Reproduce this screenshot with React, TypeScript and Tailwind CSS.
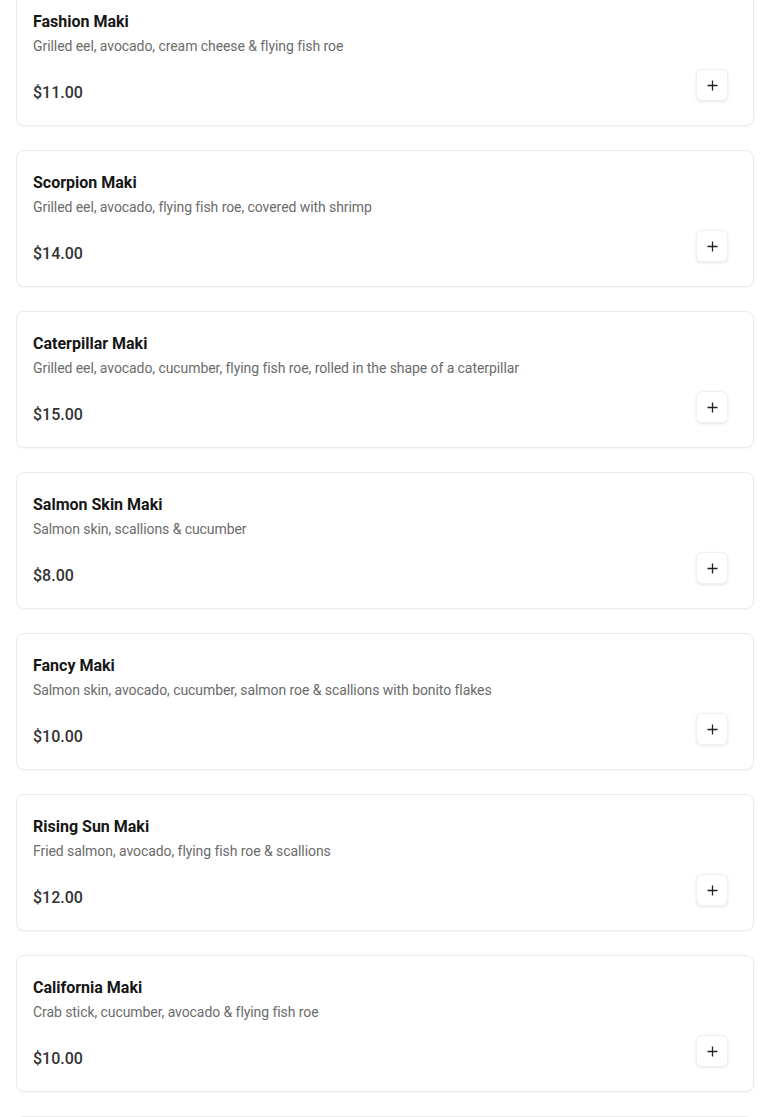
import React from "react";

const items = [
  { name: "Fashion Maki", desc: "Grilled eel, avocado, cream cheese & flying fish roe", price: "$11.00" },
  { name: "Scorpion Maki", desc: "Grilled eel, avocado, flying fish roe, covered with shrimp", price: "$14.00" },
  { name: "Caterpillar Maki", desc: "Grilled eel, avocado, cucumber, flying fish roe, rolled in the shape of a caterpillar", price: "$15.00" },
  { name: "Salmon Skin Maki", desc: "Salmon skin, scallions & cucumber", price: "$8.00" },
  { name: "Fancy Maki", desc: "Salmon skin, avocado, cucumber, salmon roe & scallions with bonito flakes", price: "$10.00" },
  { name: "Rising Sun Maki", desc: "Fried salmon, avocado, flying fish roe & scallions", price: "$12.00" },
  { name: "California Maki", desc: "Crab stick, cucumber, avocado & flying fish roe", price: "$10.00" },
  { name: "Spicy Tuna Maki", desc: "Tuna, spicy mayo, scallions & tempura flakes", price: "$9.00" },
];

function Plus() {
  return (
    <svg width="11" height="11" viewBox="0 0 11 11" fill="none">
      <path d="M5.5 0.5v10M0.5 5.5h10" stroke="#222" strokeWidth="1.3" />
    </svg>
  );
}

export default function App() {
  return (
    <div className="min-h-screen bg-white" style={{ fontFamily: "Roboto, 'Noto Sans', sans-serif" }}>
      <div className="mt-[-11px] flex flex-col gap-6 px-4">
        {items.map((it) => (
          <div
            key={it.name}
            className="rounded-lg border border-[#ebebeb] bg-white px-4 pt-[20px] pb-[20px] shadow-[0_1px_2px_rgba(0,0,0,0.04)]"
          >
            <h3 className="text-base leading-6 font-bold text-[#161616]">{it.name}</h3>
            <p className="mt-[2px] text-sm leading-5 tracking-[-0.07px] text-[#6b6b6b]">{it.desc}</p>
            <div className="mt-[13px] flex items-start justify-between">
              <span className="mt-[12px] text-base leading-6 font-medium text-[#333333]">{it.price}</span>
              <button className="mr-[9px] flex h-8 w-8 items-center justify-center rounded-md border border-[#f0f0f0] bg-white shadow-[0_1px_3px_rgba(0,0,0,0.1)]">
                <Plus />
              </button>
            </div>
          </div>
        ))}
      </div>
    </div>
  );
}
